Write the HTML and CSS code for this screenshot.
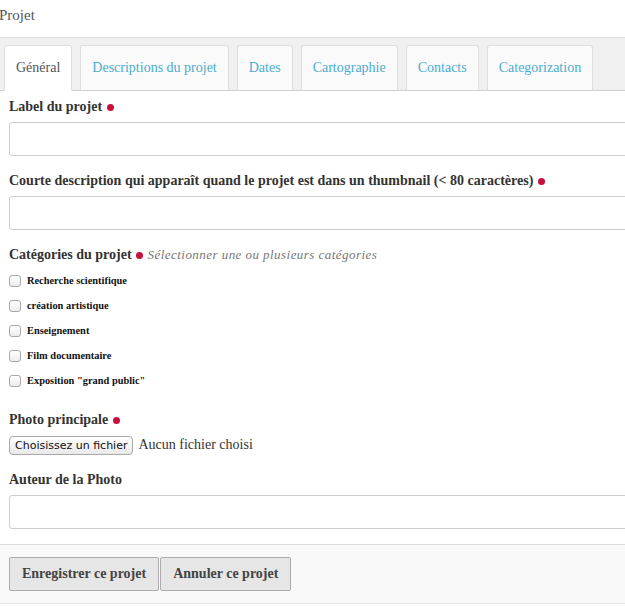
FILE: index.html
```html
<!DOCTYPE html>
<html lang="fr">
<head>
<meta charset="utf-8">
<title>Projet</title>
<link rel="stylesheet" href="styles.css">
</head>
<body>
<div class="page">
  <div class="title">Projet</div>
  <div class="tabbar">
    <div class="tab active">Général</div>
    <div class="tab">Descriptions du projet</div>
    <div class="tab">Dates</div>
    <div class="tab">Cartographie</div>
    <div class="tab">Contacts</div>
    <div class="tab">Categorization</div>
  </div>
  <form class="form">
    <div class="group">
      <label class="label">Label du projet <span class="req"></span></label>
      <input class="input" type="text">
    </div>
    <div class="group">
      <label class="label">Courte description qui apparaît quand le projet est dans un thumbnail (&lt; 80 caractères) <span class="req"></span></label>
      <input class="input" type="text">
    </div>
    <div class="group cats">
      <label class="label">Catégories du projet <span class="req"></span> <em class="hint">Sélectionner une ou plusieurs catégories</em></label>
      <div class="checks">
        <label class="check"><span class="box"></span>Recherche scientifique</label>
        <label class="check"><span class="box"></span>création artistique</label>
        <label class="check"><span class="box"></span>Enseignement</label>
        <label class="check"><span class="box"></span>Film documentaire</label>
        <label class="check"><span class="box"></span>Exposition "grand public"</label>
      </div>
    </div>
    <div class="group">
      <label class="label">Photo principale <span class="req"></span></label>
      <div class="file"><span class="filebtn">Choisissez un fichier</span><span class="filetext">Aucun fichier choisi</span></div>
    </div>
    <div class="group last">
      <label class="label">Auteur de la Photo</label>
      <input class="input" type="text">
    </div>
  </form>
  <div class="actions">
    <button class="btn" type="button">Enregistrer ce projet</button><button class="btn" type="button">Annuler ce projet</button>
  </div>
</div>
</body>
</html>
```

FILE: styles.css
```css
html, body {
  margin: 0;
  padding: 0;
  background: #fff;
  overflow: hidden;
}
body {
  font-family: "Liberation Serif", "Times New Roman", serif;
  color: #333;
}
.page {
  width: 660px;
}
.title {
  height: 37px;
  line-height: 30px;
  font-size: 15px;
  color: #555;
  margin-left: -1px;
}
.tabbar {
  display: flex;
  gap: 8px;
  align-items: flex-end;
  background: #f0f0f0;
  border-top: 1px solid #e0e0e0;
  border-bottom: 1px solid #cfcfcf;
  padding: 6px 0 0 4px;
  height: 46px;
}
.tab {
  height: 46px;
  box-sizing: border-box;
  margin-bottom: -1px;
  padding: 0 11px;
  display: flex;
  align-items: center;
  font-size: 14px;
  color: #4aaed0;
  background: #fafafa;
  border: 1px solid #dedede;
  border-bottom: 1px solid #cfcfcf;
  border-radius: 3px 3px 0 0;
}
.tab.active {
  background: #fff;
  color: #555;
  border-bottom-color: #fff;
}
.form {
  padding: 6px 0 0 9px;
}
.group {
  margin-bottom: 15px;
}
.label {
  display: block;
  font-size: 14px;
  font-weight: bold;
  line-height: 20px;
  color: #333;
  margin-bottom: 5px;
}
.req {
  display: inline-block;
  width: 7px;
  height: 7px;
  border-radius: 50%;
  background: #c8103e;
  vertical-align: 0;
  margin-left: 1px;
}
.hint {
  font-weight: normal;
  font-size: 13px;
  color: #777;
  letter-spacing: 0.45px;
  margin-left: 1px;
}
.input {
  display: block;
  box-sizing: border-box;
  width: 640px;
  height: 34px;
  border: 1px solid #ccc;
  border-radius: 3px;
  background: #fff;
  margin: 0;
}
.cats .label {
  margin-bottom: 3px;
}
.cats {
  margin-bottom: 17px;
}
.checks {
  display: flex;
  flex-direction: column;
}
.check {
  display: flex;
  align-items: center;
  height: 25px;
  font-size: 10.4px;
  font-weight: bold;
  color: #111;
}
.box {
  width: 10px;
  height: 10px;
  border: 1px solid #a8a8a8;
  border-radius: 3px;
  background: linear-gradient(#fff, #ececec);
  margin-right: 6px;
}
.file {
  display: flex;
  align-items: center;
  height: 20px;
  margin-top: 1px;
}
.filebtn {
  box-sizing: border-box;
  height: 19px;
  padding: 0 5px;
  display: flex;
  align-items: center;
  font-family: "DejaVu Sans", "Liberation Sans", sans-serif;
  font-size: 11px;
  color: #111;
  border: 1px solid #a9a9a9;
  border-radius: 4px;
  background: linear-gradient(#fff, #e9e9e9);
}
.filetext {
  font-size: 14px;
  color: #333;
  margin-left: 5px;
}
.actions {
  background: #f9f9f9;
  border-top: 1px solid #dcdcdc;
  border-bottom: 1px solid #e6e6e6;
  padding: 12px 9px;
  display: flex;
}
.btn {
  height: 34px;
  box-sizing: border-box;
  padding: 0 12px;
  font-family: "Liberation Serif", "Times New Roman", serif;
  font-size: 14px;
  font-weight: bold;
  color: #444;
  background: #e6e6e6;
  border: 1px solid #adadad;
  border-radius: 2px;
  margin: 0 1px 0 0;
}
```
